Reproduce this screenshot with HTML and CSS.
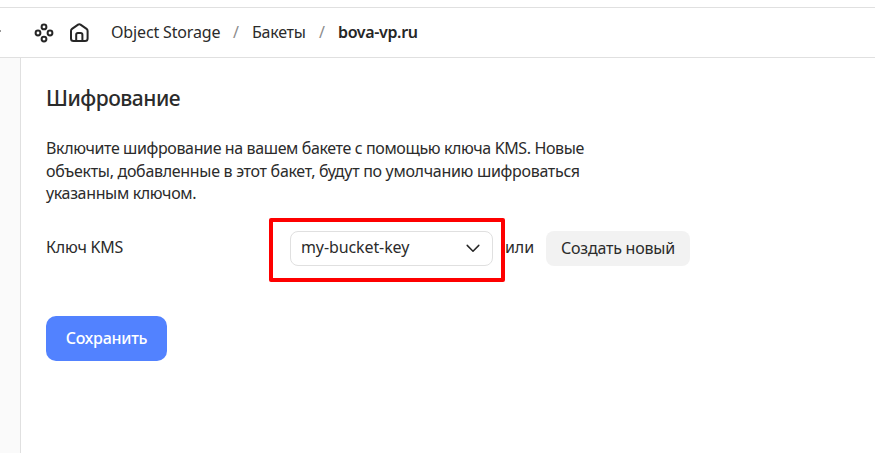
FILE: index.html
```html
<!DOCTYPE html>
<html lang="ru">
<head>
<meta charset="utf-8">
<title>Шифрование</title>
<link rel="stylesheet" href="styles.css">
</head>
<body>
<header class="topbar">
  <span class="edge-mark"></span>
  <svg class="icon-services" width="20" height="20" viewBox="0 0 20 20" fill="none" stroke="#262626" stroke-width="2"><circle cx="10" cy="3.9" r="2.4"/><circle cx="4" cy="10" r="2.4"/><circle cx="16" cy="10" r="2.4"/><circle cx="10" cy="16.1" r="2.4"/></svg>
  <svg class="icon-home" width="20" height="20" viewBox="0 0 20 20" fill="none" stroke="#262626" stroke-width="2" stroke-linejoin="round"><path d="M2 7.9Q2 6.6 3 5.9L9.1 1.6Q10.3 .8 11.5 1.6L17.6 5.9Q18.6 6.6 18.6 7.9V15.5Q18.6 18.1 16 18.1H4.6Q2 18.1 2 15.5Z"/><path d="M7.2 18V11.7Q7.2 10 8.9 10H11.7Q13.4 10 13.4 11.7V18"/></svg>
  <nav class="crumbs">
    <span class="crumb crumb-service">Object Storage</span><span class="slash">/</span>
    <span class="crumb crumb-section">Бакеты</span><span class="slash">/</span>
    <span class="crumb crumb-current">bova-vp.ru</span>
  </nav>
</header>
<div class="layout">
  <aside class="sidebar"></aside>
  <main class="content">
    <h1 class="title">Шифрование</h1>
    <p class="description"><span class="line line-1">Включите шифрование на вашем бакете с помощью ключа KMS. Новые</span><span class="line line-2">объекты, добавленные в этот бакет, будут по умолчанию шифроваться</span><span class="line line-3">указанным ключом.</span></p>
    <div class="field">
      <span class="label">Ключ KMS</span>
      <div class="select"><span class="value">my-bucket-key</span>
        <svg width="16" height="10" viewBox="0 0 16 10" fill="none" stroke="#262626" stroke-width="1.5" stroke-linecap="round" stroke-linejoin="round"><path d="M2.2 2.4L8 8.2L13.8 2.4"/></svg>
        <span class="highlight"></span>
      </div>
      <span class="or">или</span>
      <button class="create"><span>Создать новый</span></button>
    </div>
    <button class="save"><span>Сохранить</span></button>
  </main>
</div>
</body>
</html>
```
FILE: styles.css
```css
* { box-sizing: border-box; }
body {
  margin: 0;
  height: 453px;
  padding-top: 7px;
  display: flex;
  flex-direction: column;
  overflow: hidden;
  background: #fff;
  color: #2b2b2b;
  font: 16px/22.5px "Noto Sans", sans-serif;
  white-space: nowrap;
}
.topbar {
  height: 51px;
  flex: none;
  display: flex;
  align-items: center;
  border-top: 1px solid #e0e0e0;
  border-bottom: 1px solid #e0e0e0;
}
.edge-mark { width: 1px; height: 2px; margin: 0 33px 3px 0; background: #999; }
.icon-home { margin-left: 15px; }
.crumbs { display: flex; margin-left: 22px; }
.crumb-service { width: 109px; letter-spacing: -0.15px; }
.crumb-section { width: 54px; letter-spacing: -0.25px; }
.crumb-current { font-weight: 600; color: #262626; letter-spacing: -0.35px; }
.slash { width: 32px; text-align: center; color: #8c8c8c; }
.layout { flex: 1; display: flex; }
.sidebar { width: 21px; background: #fafafa; border-right: 1px solid #e0e0e0; }
.content { padding: 26px 0 0 25px; }
.title { margin: 0; font-size: 21px; line-height: 28px; font-weight: 500; letter-spacing: -0.5px; }
.description { margin: 25px 0 0; }
.line { display: block; letter-spacing: -0.3px; }
.line-1 { letter-spacing: -0.38px; }
.line-3 { letter-spacing: -0.35px; }
.field { display: flex; margin-top: 26px; height: 35px; }
.label { width: 244px; line-height: 32px; letter-spacing: -0.2px; }
.select {
  position: relative;
  width: 203px;
  height: 35px;
  display: flex;
  align-items: center;
  justify-content: space-between;
  padding: 0 11px 0 10px;
  border: 1px solid #e0e0e0;
  border-radius: 8px;
}
.value { letter-spacing: -0.1px; margin-bottom: 1px; }
.highlight { position: absolute; left: -22px; top: -14px; width: 236px; height: 64px; border: 4px solid #fe0000; border-radius: 2px; }
.or { width: 53px; padding-left: 12px; line-height: 32px; letter-spacing: -0.1px; }
button { border: 0; padding: 0; font: inherit; color: inherit; }
.create { width: 144px; height: 35px; background: #f2f2f2; border-radius: 8px; letter-spacing: -0.22px; }
.save { display: block; width: 121px; height: 45px; margin-top: 50px; background: #5282ff; border-radius: 10px; color: #fff; font-weight: 500; letter-spacing: -0.25px; }
```
